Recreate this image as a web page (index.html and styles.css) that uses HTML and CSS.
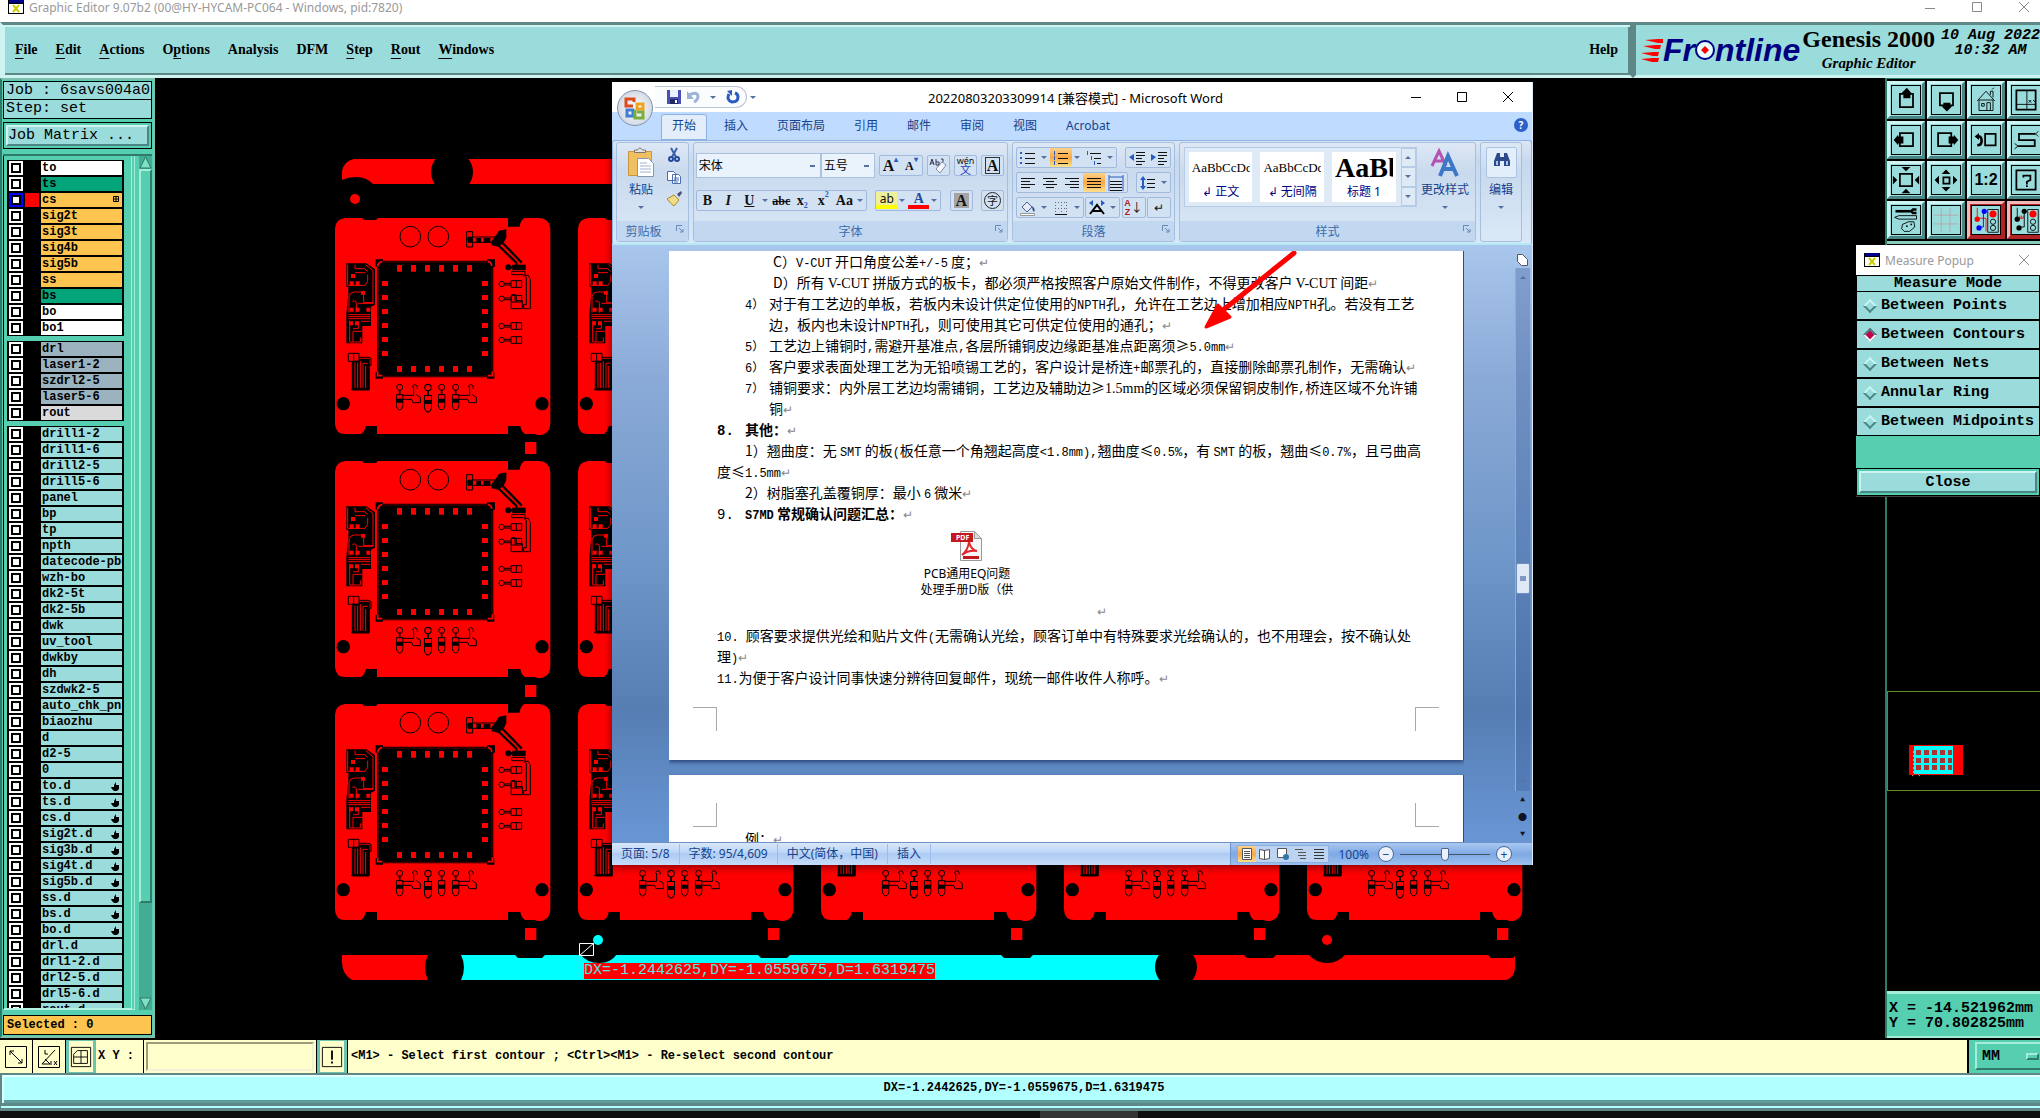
FILE: index.html
```html
<!DOCTYPE html>
<html lang="zh-CN">
<head>
    <meta charset="UTF-8">
    <meta name="viewport" content="width=device-width, initial-scale=1.0">
    <title>Graphic Editor</title>
    <link rel="stylesheet" href="styles.css">
</head>
<body>
    <header class="titlebar">
        <svg class="x-icon" width="16" height="14" viewBox="0 0 16 14"><path d="M0 0h16v14H0z"/><path fill="#fff" d="M1 4h14v9H1z"/><path fill="#008" d="M1 0h14v3H1z"/><path stroke="#cc0" stroke-width="2" d="M5 5l6 7m0-7l-6 7"/></svg>
        <span class="title-text">Graphic Editor 9.07b2 (00@HY-HYCAM-PC064 - Windows, pid:7820)</span>
        <div class="win-buttons">
            <button aria-label="Minimize"><svg width="11" height="11"><path d="M0 6.5h10"/></svg></button>
            <button aria-label="Maximize"><svg width="11" height="11"><path d="M.5.5h9v9h-9z"/></svg></button>
            <button aria-label="Close"><svg width="11" height="11"><path d="M0 0l10 10M10 0L0 10"/></svg></button>
        </div>
    </header>

    <div class="top">
        <nav class="menu">
            <a href="#"><u>F</u>ile</a>
            <a href="#"><u>E</u>dit</a>
            <a href="#"><u>A</u>ctions</a>
            <a href="#">O<u>p</u>tions</a>
            <a href="#">Analysis</a>
            <a href="#">DFM</a>
            <a href="#"><u>S</u>tep</a>
            <a href="#"><u>R</u>out</a>
            <a href="#"><u>W</u>indows</a>
            <a href="#" class="help">Help</a>
        </nav>
        <div class="brand">
            <div class="logo">
                <svg width="22" height="24" viewBox="0 0 22 24"><path fill="red" d="M4 2l13-1h5v4h-5zM2 8l13-1h5l-1 4h-5zM0 15l13-1h5l-1 4h-5zM0 21l12-1h6l-1 4h-6z"/></svg>
                <span>Fr</span><svg width="20" height="20" viewBox="0 0 20 20"><circle cx="10" cy="10" r="9" fill="#e6ffff" stroke="#008" stroke-width="2"/><path fill="red" d="M10 6l4 4-4 4-4-4z"/></svg><span>ntline</span>
            </div>
            <div class="product">
                <strong>Genesis 2000</strong>
                <em>Graphic Editor</em>
            </div>
            <div class="clock">10 Aug 2022<br>10:32 AM</div>
        </div>
    </div>

    <main class="main">
        <aside class="panel">
            <div class="job">Job : 6savs004a0</div>
            <div class="job step">Step: set</div>
            <div class="matrix"><button>Job Matrix ...</button></div>
            <div class="list-wrap">
                <div class="layers" id="layers"></div>
                <div class="scroll">
                    <button aria-label="Scroll up"><svg width="13" height="13"><path fill="#7ee0c6" stroke="#2f7a68" d="M6.5 1L12 12H1z"/></svg></button>
                    <div class="scroll-thumb"></div>
                    <button aria-label="Scroll down"><svg width="13" height="13"><path fill="#7ee0c6" stroke="#2f7a68" d="M6.5 12L12 1H1z"/></svg></button>
                </div>
            </div>
            <div class="selected">Selected : 0</div>
        </aside>

        <section class="canvas">
            <svg width="100%" height="100%">
                <defs>
                    <symbol id="padV" viewBox="0 0 24 84"><g fill="none" stroke="#000" stroke-width="3"><circle cx="12" cy="12" r="9"/><path fill="#000" d="M11 20h2v14h-2z"/><path d="M2 34h20v14H2zM2 56h20v12q-3 12-10 12T2 68z"/><path fill="#000" d="M2 48h20v8H2z"/></g></symbol>
                    <symbol id="padH" viewBox="0 0 76 28"><g fill="none" stroke="#000" stroke-width="3"><circle cx="12" cy="14" r="8"/><path d="M19 12h20M19 17h20M40 4h32v20H40zM56 4v20"/></g></symbol>
                    <symbol id="board" viewBox="0 0 666 738">
                        <path fill="red" d="M36 12H88q2 6 8 6h30q6 0 8-6H525V38H560Q562 20 574 12H620Q652 16 652 44V628Q652 656 628 662Q610 664 606 660H576Q564 652 562 636H525V660H132V636H98Q96 652 84 660H36Q8 660 6 630V44Q6 16 36 12z"/>
                        <path fill="red" d="M576 684h34v36h-34z"/>
                        <circle cx="31" cy="569" r="20"/><circle cx="627" cy="569" r="20"/>
                        <g fill="none" stroke="#000" stroke-width="3">
                            <circle cx="232" cy="68" r="31"/><circle cx="316" cy="68" r="31"/>
                            <path d="M401 53h18v16h84M401 53v46h18V85h62M401 75h18"/>
                        </g>
                        <path d="M404 68h16v18h-16zM430 72h14v14h-14zM452 72h20v14h-20zM476 80l12-14 10-16 22-4v24l-8 16-16 12-20-4z"/>
                        <path fill="none" stroke="#000" stroke-width="7" d="M492 90l58 56v14M506 84l60 62M524 160h52"/>
                        <circle cx="526" cy="160" r="9"/>
                        <path d="M538 152h40v16h-40z"/>
                        <path fill="none" stroke="#000" stroke-width="3" d="M536 172h40v12h10l6 12v88h-20v-12h8v-82l-10-8h-34zM536 242h10v18h22v24h-34z"/>
                        <rect x="132" y="140" width="349" height="350" rx="8"/>
                        <path fill="none" stroke="#000" stroke-width="8" d="M132 158v-18h18M462 140h20v18M132 474v16h18M480 474v16h-18"/>
                        <path fill="none" stroke="red" stroke-width="5" d="M134 158q0-12 14-16M464 142q12 2 12 14M134 472v13h14M478 472v13h-14"/>
                        <path fill="none" stroke="red" stroke-width="1" d="M137 162V470M477 162V470M150 144H462M150 487H462"/>
                        <path fill="none" stroke="red" stroke-width="20" stroke-dasharray="15 27" d="M192 163H418"/>
                        <path fill="none" stroke="red" stroke-width="18" stroke-dasharray="15 27" d="M192 465H418"/>
                        <path fill="none" stroke="red" stroke-width="18" stroke-dasharray="15 27" d="M156 201V430M456 201V430"/>
                        <g>
                            <path d="M40 148H100L126 166V272L114 278V336H88V388H40V300L46 240V218H40z"/>
                            <path fill="none" stroke="red" stroke-width="3" d="M44 152v62h52l8-12v-20M66 152v12h28l10 8M66 176h30M98 152l22 18v98H76M48 296v-50q4-12 16-12h26M92 230v36h30M70 296v-28q0-10-12-6M46 302h66M46 308h66M46 314h66M50 320v64h32v-14M60 384v-32h28M76 328v16H60M112 322H84"/>
                            <path fill="red" d="M54 180h12v12H54zM50 202h12v14H50zM68 202h12v14H68zM84 232h12v10H84zM50 281h12v12H50zM68 281h12v12H68zM50 322h10v12H50zM66 322h12v12H66zM100 281h12v12h-12z"/>
                            <path fill="none" stroke="#000" stroke-width="3" d="M46 418h32v24H46zM62 418v24M78 430h30l6 4v20h-6v74H58v-86M54 526h56"/>
                            <path d="M58 440h20v-6h32v92H58z"/>
                            <path fill="none" stroke="red" stroke-width="3" d="M66 446v76M74 446v76M82 442v80M90 522v-74h14M98 522v-66"/>
                        </g>
                        <use href="#padV" x="188" y="508" width="24" height="84"/>
                        <use href="#padV" x="272" y="508" width="26" height="90"/>
                        <use href="#padV" x="314" y="508" width="24" height="84"/>
                        <use href="#padV" x="356" y="508" width="24" height="84"/>
                        <g fill="none" stroke="#000" stroke-width="3"><path d="M208 544h34v-22q-8-6 2-10 12 2 8 12M208 556h28l4 10h22v-16l-12-8M376 544h34v-22q-8-6 2-10 12 2 8 12M376 556h28l4 10h22v-16l-12-8"/></g>
                        <use href="#padH" x="494" y="196" width="76" height="28"/>
                        <use href="#padH" x="494" y="240" width="76" height="28"/>
                        <use href="#padH" x="494" y="322" width="76" height="28"/>
                        <use href="#padH" x="494" y="364" width="76" height="28"/>
                    </symbol>
                </defs>
                <g transform="translate(-155 -78)">
                    <path fill="red" d="M354 159H1515V184H373Q366 177 357 177 348 177 342 180V171Q344 161 354 159z"/>
                    <circle cx="452" cy="172" r="21"/>
                    <circle cx="355" cy="199" r="5" fill="red"/>
                    <g id="boards"></g>
                    <path fill="red" d="M342 955H428Q422 967 428 980H352Q342 974 342 962z"/>
                    <path fill="red" d="M1180 955H1515V968Q1514 978 1506 980H1180z"/>
                    <path fill="#0ff" d="M461 955H1176V980H461Q467 967 461 955z"/>
                    <circle cx="1176" cy="967" r="21"/>
                    <path d="M514 954h32l-4 4h-24zM757 954h34l-4 4h-26zM1000 954h34l-4 4h-26zM1243 954h34l-4 4h-26zM1487 954h30l-4 4h-22z"/>
                    <path d="M580 954h37q-6 9-18 9t-19-9zM1308 954h38q-8 9-19 9t-19-9z"/>
                    <circle cx="598" cy="940" r="5" fill="#0ff"/>
                    <circle cx="1327" cy="940" r="5" fill="red"/>
                    <path fill="#000" stroke="#fff" d="M579.5 943.5h14v12h-14zM579 956l15-13"/>
                </g>
            </svg>
            <output class="measure">DX=-1.2442625,DY=-1.0559675,D=1.6319475</output>
        </section>

        <aside class="side">
            <div class="tools">
                <button aria-label="Pan up"><svg viewBox="0 0 32 32"><path class="w2" d="M9 9h15v15H9z"/><path d="M11 8l6-6 5 6-1 1v5h-8V9z"/></svg></button>
                <button aria-label="Pan down"><svg viewBox="0 0 32 32"><path class="w2" d="M9 8h15v14H9z"/><path d="M13 19h8v4h2l-6 6-6-6h2z"/></svg></button>
                <button aria-label="Home"><svg viewBox="0 0 32 32"><path class="ln" d="M8 16h16v12H8zM6 17L16 6l10 11M17 28v-9h4v9M11 20h3v3h-3zM21 10V6h3v7M23 4l2-2"/></svg></button>
                <button aria-label="XY window"><svg viewBox="0 0 32 32"><path class="w2" d="M5 5h22v22H5z"/><path class="ln" d="M17 5v22M5 21h22M19 16l3 3m0-3l-3 3M24 16l2 2 1-2"/></svg></button>
                <button aria-label="Pan left"><svg viewBox="0 0 32 32"><path class="w2" d="M9 8h15v15H9z"/><path d="M2 16l5-6v2h6v8H7v2z"/></svg></button>
                <button aria-label="Pan right"><svg viewBox="0 0 32 32"><path class="w2" d="M7 8h15v15H7z"/><path d="M30 16l-5-6v2h-6v8h6v2z"/></svg></button>
                <button aria-label="Previous view"><svg viewBox="0 0 32 32"><path class="w2" d="M15 9h12v13H15z"/><path class="w3" d="M6 12q5-1 5 5 0 5-5 5"/><path d="M3 12l5-4v8z"/></svg></button>
                <button aria-label="Serpentine"><svg viewBox="0 0 32 32"><path class="w2" d="M27 9H8v7h18v7H7"/><path class="ln" d="M27 9l3-3M27 9l3 3M7 23l-4-3M7 23l-4 3"/></svg></button>
                <button aria-label="Zoom out"><svg viewBox="0 0 32 32"><path class="w2" d="M9 9h14v14H9z"/><path d="M11 1h10l-5 5zM11 31h10l-5-5zM1 11v10l5-5zM31 11v10l-5-5z"/></svg></button>
                <button aria-label="Zoom in"><svg viewBox="0 0 32 32"><path class="w2" d="M13 13h7v7h-7z"/><path d="M11 9h10l-5-5zM11 24h10l-5 5zM8 11v10l-5-5zM24 11v10l5-5z"/></svg></button>
                <button class="ratio">1:2</button>
                <button aria-label="Query"><svg viewBox="0 0 32 32"><path class="w2" d="M5 5h22v22H5z"/><path class="w2" d="M13 13v-2h8v5l-4 2v3M16 23h2"/></svg></button>
                <button aria-label="Drawing tools"><svg viewBox="0 0 32 32"><path class="w3" d="M4 6h17"/><path class="w3" d="M28 4h-4l-2 2 2 2h4"/><path class="ln" d="M3 13l5-2h20v4H8zM12 21l7-3h6l1 6-6 5h-6l-3-3z"/><circle cx="17" cy="23" r="1"/><circle cx="22" cy="21" r="1"/></svg></button>
                <button aria-label="Grid"><svg viewBox="0 0 32 32"><path fill="none" stroke="#b9a3a8" d="M10.500 2v28M20.500 2v28M2 10.500h28M2 20.500h28"/></svg></button>
                <button class="hot" aria-label="Snap one"><svg viewBox="0 0 32 32"><path fill="none" stroke="red" d="M6 2v12h10v15"/><path fill="none" stroke="#00f" d="M13 6v18H7"/><circle cx="6" cy="15" r="3" fill="red"/><circle cx="14" cy="6" r="3" fill="#00f"/><circle cx="8" cy="25" r="3" fill="#00f"/><path class="ln" d="M18 4h12v26H18z"/><circle cx="24" cy="9" r="4" fill="red"/><circle class="ln" cx="24" cy="18" r="3"/><circle class="ln" cx="24" cy="25" r="3"/></svg></button>
                <button class="hot" aria-label="Snap two"><svg viewBox="0 0 32 32"><path class="ln" d="M6 2v12M14 6v18H8"/><path fill="none" stroke="red" d="M7 14h6M9 14v-3M11 14v-3M13 14v-3"/><circle cx="6" cy="15" r="3"/><circle cx="14" cy="6" r="3"/><circle cx="8" cy="25" r="3"/><path class="ln" d="M18 4h12v26H18z"/><circle cx="24" cy="9" r="4" fill="red"/><circle class="ln" cx="24" cy="18" r="3"/><circle class="ln" cx="24" cy="25" r="3"/></svg></button>
            </div>
            <div class="overview">
                <svg width="54" height="34" viewBox="0 0 54 34">
                    <path fill="red" d="M0 0h54v30H0z"/><path fill="#0ff" d="M5 1h39v28H5z"/>
                    <path fill="none" stroke="#a33" stroke-width="5" stroke-dasharray="5 3" d="M7 7.500h36M7 15.500h36M7 22.500h36"/>
                    <path fill="none" stroke="#aaa" stroke-dasharray="2 2" d="M4.500 6v24M3 31l4-3 4 3"/>
                </svg>
            </div>
            <div class="coords">X = -14.521962mm<br>Y = 70.802825mm</div>
        </aside>
    </main>

    <footer class="command">
        <button class="flat" aria-label="Snap off"><svg viewBox="0 0 24 24"><path class="ln" d="M1.500 1.500h21v21h-21zM6 6l12 12M6 10V6h4M14 18h4v-4"/></svg></button>
        <button class="flat" aria-label="Angle"><svg viewBox="0 0 24 24"><path class="ln" d="M1.500 1.500h21v21h-21zM5 19L18 5M5 19h8l-5-5M8 5v4h3M14 16v4M17 16l3 4M20 16l-3 4"/></svg></button>
        <button class="raised" aria-label="Grid snap"><svg viewBox="0 0 24 24"><path class="ln" d="M1.500 1.500h21v21h-21zM8 5h11v14H4V9zM12 5v14M4 12h15"/></svg></button>
        <label for="xy">X Y :</label>
        <div class="xy"><input id="xy" type="text"></div>
        <button class="raised" aria-label="Alert"><svg viewBox="0 0 24 24"><path class="ln" d="M1.500 1.500h21v21h-21z"/><path class="w2" d="M12 5v10M12 17v2"/></svg></button>
        <p class="message">&lt;M1&gt; - Select first contour ; &lt;Ctrl&gt;&lt;M1&gt; - Re-select second contour</p>
        <div class="units"><button>MM<i></i></button></div>
    </footer>
    <footer class="status">DX=-1.2442625,DY=-1.0559675,D=1.6319475</footer>
    <div class="taskbar"><i></i></div>

    <section class="popup">
        <div class="popup-title">
            <svg class="x-icon" width="16" height="14" viewBox="0 0 16 14"><path d="M0 0h16v14H0z"/><path fill="#fff" d="M1 4h14v9H1z"/><path fill="#008" d="M1 0h14v3H1z"/><path stroke="#cc0" stroke-width="2" d="M5 5l6 7m0-7l-6 7"/></svg>
            <span>Measure Popup</span>
            <button aria-label="Close popup"><svg width="11" height="11"><path d="M0 0l10 10M10 0L0 10"/></svg></button>
        </div>
        <h2>Measure Mode</h2>
        <label><input type="radio" name="mode">Between Points</label>
        <label><input type="radio" name="mode" checked>Between Contours</label>
        <label><input type="radio" name="mode">Between Nets</label>
        <label><input type="radio" name="mode">Annular Ring</label>
        <label><input type="radio" name="mode">Between Midpoints</label>
        <div class="popup-foot"><button>Close</button></div>
    </section>

    <section class="word">
        <div class="word-title">
            <div class="qat">
                <button aria-label="保存"><svg width="14" height="14" viewBox="0 0 14 14"><path fill="#4a4fb5" d="M0 0h14v14H0z"/><path fill="#e9f0fb" d="M3 0h8v7H3z"/><path fill="#222a66" d="M3 9h8v5H3z"/><path fill="#fff" d="M8 10h2v3H8z"/></svg></button>
                <button aria-label="撤消"><svg width="14" height="14" viewBox="0 0 14 14"><path fill="none" stroke="#9db3d6" stroke-width="3" d="M2 5q8-4 9 1 0 4-4 6"/><path fill="#9db3d6" d="M0 1v8h7z"/></svg></button>
                <i class="dd"></i>
                <button aria-label="重复"><svg width="14" height="14" viewBox="0 0 14 14"><path fill="none" stroke="#2a5bc0" stroke-width="3" d="M3 4q-3 6 3 8 6 0 6-5 0-3-3-4"/><path fill="#2a5bc0" d="M6 0v6L1 1z"/></svg></button>
            </div>
            <i class="dd more"></i>
            <span class="word-name">20220803203309914 [兼容模式] - Microsoft Word</span>
            <div class="win-buttons dark">
                <button aria-label="最小化"><svg width="11" height="11"><path d="M0 5.500h10"/></svg></button>
                <button aria-label="最大化"><svg width="11" height="11"><path d="M.5.5h9v9h-9z"/></svg></button>
                <button aria-label="关闭"><svg width="11" height="11"><path d="M0 0l10 10M10 0L0 10"/></svg></button>
            </div>
        </div>
        <button class="orb" aria-label="Office"><svg width="24" height="24" viewBox="0 0 24 24"><g fill="none" stroke-width="3"><path stroke="#dd4a1c" d="M10 10H3V3h8v3"/><path stroke="#f0a31c" d="M14 8h6v5h-6z"/><path stroke="#3f7fd0" d="M4 14h6v6H4z"/><path stroke="#79ae3a" d="M14 16h6v6h-8v-8"/></g></svg></button>
        <nav class="tabs">
            <a href="#" class="active">开始</a>
            <a href="#">插入</a>
            <a href="#">页面布局</a>
            <a href="#">引用</a>
            <a href="#">邮件</a>
            <a href="#">审阅</a>
            <a href="#">视图</a>
            <a href="#">Acrobat</a>
            <button class="help-btn" aria-label="帮助">?</button>
        </nav>

        <div class="ribbon">
            <div class="group clip">
                <div class="body">
                    <button class="big paste"><svg width="28" height="32" viewBox="0 0 28 32"><path fill="#f0c060" stroke="#c8963c" d="M1.500 4.500h23v24h-23z"/><path fill="#e4e4e4" stroke="#777" d="M7.500 5.500V3h3q2-4 5 0h3v2.500z"/><path fill="#fff" stroke="#8a96ad" d="M10.500 11.500h11l5 5v13h-16z"/><path stroke="#9fb2d4" d="M13 16h7M13 19h11M13 22h11M13 25h11"/></svg>粘贴<i class="dd"></i></button>
                    <div class="stack">
                        <button aria-label="剪切"><svg width="16" height="16" viewBox="0 0 16 16"><path fill="none" stroke="#3b5fa8" stroke-width="2" d="M5 1l5 9M11 1L6 10"/><circle cx="5" cy="12" r="2" fill="none" stroke="#234a9b" stroke-width="2"/><circle cx="11" cy="12" r="2" fill="none" stroke="#234a9b" stroke-width="2"/></svg></button>
                        <button aria-label="复制"><svg width="16" height="16" viewBox="0 0 16 16"><path fill="#fff" stroke="#4a6eb5" d="M1.500 2.500h6l2 2v7h-8zM6.500 5.500h6l2 2v7h-8z"/><path stroke="#4a6eb5" d="M8 9h5M8 11h5M8 13h4"/></svg></button>
                        <button aria-label="格式刷"><svg width="16" height="16" viewBox="0 0 16 16"><path fill="#4b4f80" d="M11 3l4-3 1 2-3 4z"/><path fill="#f3dc86" stroke="#a88830" d="M1 8l7-4 5 5-5 6q-3-2-7-7z"/></svg></button>
                    </div>
                </div>
                <h3>剪贴板<svg class="launch" width="8" height="8" viewBox="0 0 8 8"><path d="M.5 6V.5H6M3 3l4 4M7 4v3H4"/></svg></h3>
            </div>
            <div class="group font">
                <div class="body rows2">
                    <div class="line">
                        <div class="combos">
                            <select class="face" aria-label="字体"><option>宋体</option></select>
                            <select class="size" aria-label="字号"><option>五号</option></select>
                        </div>
                        <div class="set"><button class="ser f18">A<sup>▴</sup></button><button class="ser f14">A<sup>▾</sup></button></div>
                        <div class="set"><button aria-label="清除格式"><svg width="18" height="18" viewBox="0 0 18 18"><path fill="#f4f7fb" stroke="#7e8ca8" d="M7 12l6-7 4 3-6 8z"/><path fill="none" stroke="#335" d="M1 8l2-6 2 6M2 6h3M7 2v6h3V5H7M12 2h2v3"/></svg></button></div>
                        <div class="set"><button class="wen"><small>wén</small>文</button></div>
                        <div class="set"><button class="ser f16"><b class="boxed">A</b></button></div>
                    </div>
                    <div class="line">
                        <div class="set"><button class="ser"><b>B</b></button><button class="ser"><b><i>I</i></b></button><button class="ser"><b><u>U</u></b></button><i class="dd"></i><button class="ser f14"><s>abc</s></button><button class="ser">x<sub>2</sub></button><button class="ser">x<sup>2</sup></button><button class="ser">Aa</button><i class="dd"></i></div>
                        <div class="set"><button class="hl">ab</button><i class="dd"></i><button class="ser col">A</button><i class="dd"></i></div>
                        <div class="set"><button class="ser f16"><b class="shade">A</b></button></div>
                        <div class="set"><button class="ring">字</button></div>
                    </div>
                </div>
                <h3>字体<svg class="launch" width="8" height="8" viewBox="0 0 8 8"><path d="M.5 6V.5H6M3 3l4 4M7 4v3H4"/></svg></h3>
            </div>
            <div class="group para">
                <div class="body rows3">
                    <div class="line">
                        <div class="set"><button aria-label="项目符号"><svg width="16" height="16"><path class="bars" d="M5 3h10M5 8h10M5 13h10"/><path stroke="#2a5bc0" stroke-width="2" d="M0 3h2M0 8h2M0 13h2"/></svg></button><i class="dd"></i><button class="on" aria-label="编号"><svg width="16" height="16"><path class="bars" d="M5 3h10M5 8h10M5 13h10"/><path stroke="#2a5bc0" d="M1.500 1v4M1.500 6v4M1.500 11v4"/></svg></button><i class="dd"></i><button aria-label="多级列表"><svg width="16" height="16"><path class="bars" d="M4 3h11M8 8h7M11 13h4"/><path stroke="#2a5bc0" d="M1.500 1v4M5.500 6v4M8.500 11v4"/></svg></button><i class="dd"></i></div>
                        <div class="set"><button aria-label="减少缩进量"><svg width="16" height="16"><path class="bars" d="M7 2h9M7 5h9M7 8h6M7 11h9M7 14h6"/><path fill="#2a5bc0" d="M5 4v7L0 7z"/></svg></button><button aria-label="增加缩进量"><svg width="16" height="16"><path class="bars" d="M7 2h9M7 5h9M7 8h6M7 11h9M7 14h6"/><path fill="#2a5bc0" d="M0 4v7l5-4z"/></svg></button></div>
                    </div>
                    <div class="line">
                        <div class="set"><button aria-label="左对齐"><svg width="16" height="16"><path class="bars" d="M1 3h14M1 6h9M1 9h14M1 12h9"/></svg></button><button aria-label="居中"><svg width="16" height="16"><path class="bars" d="M1 3h14M4 6h8M1 9h14M4 12h8"/></svg></button><button aria-label="右对齐"><svg width="16" height="16"><path class="bars" d="M1 3h14M6 6h9M1 9h14M6 12h9"/></svg></button><button class="on" aria-label="两端对齐"><svg width="16" height="16"><path class="bars" d="M1 3h14M1 6h14M1 9h14M1 12h14"/></svg></button><button aria-label="分散对齐"><svg width="16" height="16"><path class="bars" d="M2 6h12M2 9h12M2 12h12M2 15h12"/><path stroke="#2a5bc0" d="M1 0v16M15 0v16M1 2h14"/></svg></button></div>
                        <div class="set"><button aria-label="行距"><svg width="16" height="16"><path class="bars" d="M7 4h8M7 8h8M7 12h8"/><path fill="#2a5bc0" d="M3 1l3 4H4v6h2l-3 4-3-4h2V5H0z"/></svg></button><i class="dd"></i></div>
                    </div>
                    <div class="line">
                        <div class="set"><button aria-label="底纹"><svg width="16" height="16"><path fill="#e6edf8" stroke="#4a5f8a" d="M2 7l5-5 5 5-5 5z"/><path fill="#2a4b90" d="M12 6q4 3 2 6-2-2-2-6z"/><path fill="#fff" stroke="#999" d="M.5 13.500h14v2H.5z"/></svg></button><i class="dd"></i><button aria-label="边框"><svg width="16" height="16"><path fill="none" stroke="#667" stroke-dasharray="1 2" d="M2 2.500h12M2 8.500h12M2.500 2v12M8.500 2v12M13.500 2v12"/><path class="bars" d="M2 14h12"/></svg></button><i class="dd"></i></div>
                        <div class="set"><button aria-label="中文版式"><svg width="16" height="16"><path fill="none" stroke="#000" stroke-width="2" d="M1 14l7-9 7 9M4 11h8"/><path fill="#2a5bc0" d="M0 3l4-3v6zM16 3l-4-3v6z"/></svg></button><i class="dd"></i></div>
                        <div class="set"><button class="sort"><span>A<br>Z</span>↓</button></div>
                        <div class="set"><button>↵</button></div>
                    </div>
                </div>
                <h3>段落<svg class="launch" width="8" height="8" viewBox="0 0 8 8"><path d="M.5 6V.5H6M3 3l4 4M7 4v3H4"/></svg></h3>
            </div>
            <div class="group styles">
                <div class="body">
                    <div class="gallery">
                        <button><span>AaBbCcDd</span>↲ 正文</button>
                        <button><span>AaBbCcDd</span>↲ 无间隔</button>
                        <button><span class="h1">AaBb</span>标题 1</button>
                        <div class="gal-scroll"><button aria-label="上一行"><i class="dd up"></i></button><button aria-label="下一行"><i class="dd"></i></button><button aria-label="其他"><i class="dd"></i></button></div>
                    </div>
                    <button class="big"><svg width="32" height="32" viewBox="0 0 32 32"><path fill="none" stroke="#b553b0" stroke-width="3" d="M3 19L10 4l7 15M6 14h9"/><path fill="none" stroke="#3c78c8" stroke-width="4" d="M11 29l8-20 9 20M14 22h12"/></svg>更改样式<i class="dd"></i></button>
                </div>
                <h3>样式<svg class="launch" width="8" height="8" viewBox="0 0 8 8"><path d="M.5 6V.5H6M3 3l4 4M7 4v3H4"/></svg></h3>
            </div>
            <div class="group edit">
                <button class="big"><span class="bino"><svg width="16" height="16" viewBox="0 0 16 16"><path fill="#2d4a8a" d="M3 1h3v4h4V1h3l3 8v5h-6V9H6v5H0V9z"/><path fill="#a9c3ee" d="M2 9h2v4H2zM12 9h2v4h-2z"/></svg></span>编辑<i class="dd"></i></button>
            </div>
        </div>

        <div class="doc">
            <div class="pages">
                <article class="page">
                    <p class="in3">C）<span>V-CUT</span> 开口角度公差<span>+/-5</span> 度；<i>↵</i></p>
                    <p class="in3">D）所有 <span class="rm">V-CUT</span> 拼版方式的板卡，都必须严格按照客户原始文件制作，不得更改客户 <span class="rm">V-CUT</span> 间距<i>↵</i></p>
                    <p class="num"><b>4）</b>对于有工艺边的单板，若板内未设计供定位使用的<span>NPTH</span>孔，允许在工艺边上增加相应<span>NPTH</span>孔。若没有工艺边，板内也未设计<span>NPTH</span>孔，则可使用其它可供定位使用的通孔；<i>↵</i></p>
                    <p class="num"><b>5）</b>工艺边上铺铜时<span>,</span>需避开基准点<span>,</span>各层所铺铜皮边缘距基准点距离须≥<span>5.0mm</span><i>↵</i></p>
                    <p class="num"><b>6）</b>客户要求表面处理工艺为无铅喷锡工艺的，客户设计是桥连<span>+</span>邮票孔的，直接删除邮票孔制作，无需确认<i>↵</i></p>
                    <p class="num"><b>7）</b>铺铜要求：内外层工艺边均需铺铜，工艺边及辅助边≥<span class="rm">1.5mm</span>的区域必须保留铜皮制作<span>,</span>桥连区域不允许铺铜<i>↵</i></p>
                    <p class="head"><b>8.</b><strong>其他：</strong><i>↵</i></p>
                    <p class="first">1）翘曲度：无 <span>SMT</span> 的板<span>(</span>板任意一个角翘起高度<span>&lt;1.8mm),</span>翘曲度≤<span>0.5%</span>，有 <span>SMT</span> 的板，翘曲≤<span>0.7%</span>，且弓曲高度≤<span>1.5mm</span><i>↵</i></p>
                    <p class="first">2）树脂塞孔盖覆铜厚：最小 <span>6</span> 微米<i>↵</i></p>
                    <p class="head"><span class="no">9.</span><strong><span>S7MD</span> 常规确认问题汇总：</strong><i>↵</i></p>
                    <div class="attach">
                        <a href="#">
                            <svg width="32" height="32" viewBox="0 0 32 32"><path fill="#f7f7f7" stroke="#999" d="M9.500 1.500h14l7 7v22h-21z"/><path fill="#ddd" stroke="#999" d="M23.500 1.500v7h7z"/><rect y="3" width="22" height="9" fill="#c4181f"/><path fill="none" stroke="#e0252b" stroke-width="2" d="M18 12q-1 8-7 13 6-5 15-4-6-1-8-9z"/><path fill="#c4181f" d="M12 26h16v3H12z"/><text x="5" y="10" fill="#fff" font-size="7" font-weight="bold">PDF</text></svg>
                            PCB通用EQ问题<br>处理手册D版（供
                        </a>
                        <i>↵</i>
                    </div>
                    <p><span>10. </span>顾客要求提供光绘和贴片文件<span>(</span>无需确认光绘，顾客订单中有特殊要求光绘确认的，也不用理会，按不确认处理<span>)</span><i>↵</i></p>
                    <p><span>11.</span>为便于客户设计同事快速分辨待回复邮件，现统一邮件收件人称呼。<i>↵</i></p>
                    <div class="marks foot"><u></u><u></u></div>
                </article>
                <article class="page next">
                    <div class="marks top-marks"><u></u><u></u></div>
                    <p class="first">例：<i>↵</i></p>
                </article>
                <svg class="arrow" width="96" height="84" viewBox="0 0 96 84"><path stroke="red" stroke-width="5" stroke-linecap="round" d="M92 2L20 60"/><path fill="red" stroke="red" stroke-width="3" stroke-linejoin="round" d="M4 76L16 54 28 66z"/></svg>
            </div>
            <div class="vscroll">
                <button aria-label="标尺"><svg width="12" height="14"><path fill="#fff" stroke="#556" d="M.5 1.500h5l5 5v6h-6l-4-4z"/></svg></button>
                <div class="track"><i class="dd up"></i><div class="thumb"></div><i class="dd"></i></div>
                <button>⯅</button><button>●</button><button>⯆</button>
            </div>
        </div>

        <div class="word-status">
            <span>页面: 5/8</span><span>字数: 95/4,609</span><span>中文(简体，中国)</span><span>插入</span>
            <div class="zoom">
                <div class="views">
                    <button class="on" aria-label="页面视图"><svg width="14" height="14"><path fill="#fff" stroke="#555" d="M2.500 1.500h9v11h-9z"/><path stroke="#555" d="M4 4.500h6M4 6.500h6M4 8.500h6M4 10.500h6"/></svg></button>
                    <button aria-label="阅读版式"><svg width="14" height="14"><path fill="#fff" stroke="#555" d="M1.500 2.500l5 1v9l-5-1zM11.500 2.500l-5 1v9l5-1z"/></svg></button>
                    <button aria-label="Web版式"><svg width="14" height="14"><path fill="#fff" stroke="#555" d="M1.500 1.500h9v9h-9z"/><circle cx="10" cy="10" r="3" fill="#37a"/></svg></button>
                    <button aria-label="大纲"><svg width="14" height="14"><path stroke="#555" d="M1 2.500h8M4 5.500h8M4 8.500h8M6 11.500h6"/></svg></button>
                    <button aria-label="草稿"><svg width="14" height="14"><path stroke="#333" d="M2 2.500h10M2 5.500h10M2 8.500h10M2 11.500h10"/></svg></button>
                </div>
                <output>100%</output>
                <button class="round">−</button>
                <input type="range" aria-label="显示比例" value="50">
                <button class="round">+</button>
            </div>
        </div>
    </section>

    <script>
        const groups = [
            [
                ['to', 'white'], ['ts', 'green'], ['cs', 'gold', 'active'], ['sig2t', 'gold'], ['sig3t', 'gold'],
                ['sig4b', 'gold'], ['sig5b', 'gold'], ['ss', 'gold'], ['bs', 'green'], ['bo', 'white'], ['bo1', 'white']
            ],
            [['drl', 'steel'], ['laser1-2', 'steel'], ['szdrl2-5', 'steel'], ['laser5-6', 'steel'], ['rout', 'grey']],
            ['drill1-2', 'drill1-6', 'drill2-5', 'drill5-6', 'panel', 'bp', 'tp', 'npth', 'datecode-pbc', 'wzh-bo',
             'dk2-5t', 'dk2-5b', 'dwk', 'uv_tool', 'dwkby', 'dh', 'szdwk2-5', 'auto_chk_pnl', 'biaozhu', 'd', 'd2-5', '0',
             'to.d*', 'ts.d*', 'cs.d*', 'sig2t.d*', 'sig3b.d*', 'sig4t.d*', 'sig5b.d*', 'ss.d*', 'bs.d*', 'bo.d*',
             'drl.d', 'drl1-2.d', 'drl2-5.d', 'drl5-6.d', 'rout.d'].map(n => [n, 'aqua'])
        ];
        const hand = '<svg width="8" height="9"><path d="M5 0v3h3v4L6 9H3L1 7 0 5h3V3z"/></svg>';
        const mark = '<svg width="6" height="6"><path fill="none" stroke="#000" d="M.5.5h5v5h-5zM3 0v6M0 3h6"/></svg>';

        document.getElementById('layers').innerHTML = groups.map(rows =>
            '<div class="layer-group">' + rows.map(([name, color, state]) =>
                `<label class="layer ${state || ''}"><input type="checkbox"><i></i>` +
                `<span class="${color}">${name.replace('*', '')}</span>` +
                (name.endsWith('*') ? hand : state ? mark : '') + '</label>'
            ).join('') + '</div>'
        ).join('');

        // 5 x 3 step-and-repeat, 243 px pitch
        let boards = '';
        for (let row = 0; row < 3; row++) {
            for (let col = 0; col < 5; col++) {
                boards += `<use href="#board" x="${333 + col * 243}" y="${214 + row * 243}" width="222" height="246"/>`;
            }
        }
        document.getElementById('boards').innerHTML = boards;
    </script>
</body>
</html>
```
FILE: styles.css
```css
* {
    margin: 0;
    padding: 0;
    box-sizing: border-box;
}
body {
    display: flex;
    flex-direction: column;
    height: 100vh;
    overflow: hidden;
    position: relative;
    background: #000;
    color: #000;
    font-family: "Liberation Mono", "Noto Sans CJK SC", monospace;
    font-size: 12px;
}
button, input, select {
    font: inherit;
    color: inherit;
    background: none;
    border: none;
    border-radius: 0;
}
a {
    color: inherit;
    text-decoration: none;
}
svg {
    display: block;
    flex: none;
}
.ln { fill: none; stroke: #000; }
.w2 { fill: none; stroke: #000; stroke-width: 2; }
.w3 { fill: none; stroke: #000; stroke-width: 3; }

/* title bar */
.titlebar {
    display: flex;
    height: 22px;
    background: #fff;
    color: #999;
    font-family: "Noto Sans", sans-serif;
    padding: 0 10px 8px 8px;
    align-items: center;
    gap: 5px;
}
.win-buttons {
    display: flex;
    gap: 36px;
    margin-left: auto;
}
.win-buttons path, .popup-title button path {
    fill: none;
    stroke: #888;
}
.win-buttons.dark path { stroke: #000; }

/* menu and brand */
.top {
    display: flex;
    height: 56px;
    background: #9adbdb;
}
.menu {
    flex: 1;
    display: flex;
    align-items: center;
    gap: 18px;
    padding: 0 12px;
    border: 3px solid #5f8786;
    border-color: #5f8786 #5f8786 #cdf3f3 #cdf3f3;
    box-shadow: inset 2px 2px #cdf3f3, inset -2px -2px #5f8786;
    font: bold 14px "Liberation Serif", serif;
}
.menu u { text-underline-offset: 4px; }
.help { margin-left: auto; }
.brand {
    width: 407px;
    display: flex;
    border: 3px solid #5f8786;
    border-width: 3px 0 3px 3px;
    border-bottom-color: #cdf3f3;
    padding-left: 5px;
    overflow: hidden;
}
.logo {
    display: flex;
    align-items: center;
    color: #000080;
    font: italic bold 32px/48px "Liberation Sans", sans-serif;
}
.product {
    width: 144px;
    text-align: center;
    font-family: "Liberation Serif", serif;
    line-height: 20px;
    white-space: nowrap;
}
.product strong {
    display: block;
    font-size: 24px;
    line-height: 28px;
}
.product em {
    font-weight: bold;
    font-size: 15px;
}
.clock {
    font: italic bold 15px/15px "Liberation Mono", monospace;
    padding: 3px 0 0 4px;
    text-align: center;
    white-space: nowrap;
}

/* main area */
.main {
    flex: 1;
    min-height: 0;
    display: flex;
}
.panel {
    width: 155px;
    display: flex;
    flex-direction: column;
    background: #55cfb0;
    border: 2px solid #7fbfae;
    border-left-color: #2f7a68;
    padding: 1px 1px 0;
    font-weight: bold;
}
.job {
    height: 19px;
    border: 1px solid #000;
    background: #9adbdb;
    padding-left: 2px;
    font: 15px/18px "Liberation Mono", monospace;
    white-space: nowrap;
}
.step { border-top: none; }
.matrix {
    margin-top: 3px;
    height: 27px;
    border: 1px solid #000;
    padding: 2px;
}
.matrix button, .popup-foot button {
    display: block;
    width: 100%;
    height: 100%;
    background: #9adbdb;
    border: 2px solid #cdf3f3;
    border-right-color: #4a8586;
    border-bottom-color: #4a8586;
    font-size: 15px;
    line-height: 17px;
}
.matrix button {
    text-align: left;
    font-weight: normal;
}
.list-wrap {
    flex: 1;
    min-height: 0;
    display: flex;
    gap: 4px;
    margin-top: 5px;
    border-top: 2px solid #2f7a68;
}
.layers {
    flex: 1;
    overflow: hidden;
    display: flex;
    flex-direction: column;
    gap: 5px;
    padding: 4px 7px 0 3px;
    border-left: 1px solid #000;
    border-right: 4px double #a5ecd9;
    border-bottom: 2px solid #b5f2e2;
}
.layer-group {
    background: #000;
    flex: none;
}
.layer {
    display: flex;
    align-items: center;
    height: 16px;
    gap: 2px;
    padding: 0 2px;
    position: relative;
}
.layer input {
    appearance: none;
    width: 14px;
    height: 14px;
    background: #fff;
    border: 2px solid #fff;
    outline: 2px solid #000;
    outline-offset: -4px;
}
.layer i {
    width: 14px;
    height: 14px;
}
.layer.active input { border-color: #00f; background: #fff; }
.layer.active i { background: red; }
.layer span {
    flex: 1;
    height: 14px;
    line-height: 15px;
    padding-left: 1px;
    overflow: hidden;
    white-space: nowrap;
}
.layer svg {
    position: absolute;
    right: 5px;
    top: 4px;
}
.white { background: #fff; }
.green { background: #05a57c; }
.gold { background: #fdc44f; }
.steel { background: #9ab3be; }
.grey { background: #dadada; }
.aqua { background: #9adbdb; }
.scroll {
    width: 13px;
    display: flex;
    flex-direction: column;
    background: #43ac93;
}
.scroll-thumb {
    height: 86%;
    margin-bottom: auto;
    background: #55cfb0;
    border: 2px solid #a5ecd9;
    border-right-color: #2f7a68;
    border-bottom-color: #2f7a68;
}
.selected {
    margin: 5px 0 1px;
    height: 20px;
    padding-left: 3px;
    border: 1px solid #000;
    background: #fdc44f;
    line-height: 19px;
}
.canvas {
    flex: 1;
    position: relative;
    overflow: hidden;
}
.measure {
    position: absolute;
    left: 429px;
    bottom: 59px;
    background: red;
    color: #5be3e3;
    font-size: 15px;
    line-height: 16px;
}
.side {
    width: 155px;
    border-left: 2px solid #2f7a68;
    display: flex;
    flex-direction: column;
    overflow: hidden;
}
.tools {
    display: grid;
    grid-template-columns: repeat(4, 38px);
    gap: 2px;
    padding: 2px 0;
    border-top: 1px solid #2f7a68;
    border-bottom: 3px solid #87c9bb;
}
.tools button {
    height: 38px;
    background: #9adbdb;
    border: 3px solid #cdf3f3;
    border-right-color: #4a8586;
    border-bottom-color: #4a8586;
}
.tools svg {
    width: 30px;
    height: 30px;
    margin: 1px;
    border: 1px solid #000;
}
.tools .ratio {
    font: bold 16px "Liberation Sans", sans-serif;
    outline: 1px solid #000;
    outline-offset: -5px;
}
.tools .hot { border-color: #b02224; border-top-color: #f0b8b8; border-left-color: #f0b8b8; box-shadow: inset 0 0 0 2px #b02224; }
.overview {
    height: 100px;
    margin-top: auto;
    border: 1px solid #5a8f2c;
    border-right: none;
    padding: 53px 0 0 21px;
}
.coords {
    margin-top: 200px;
    height: 47px;
    background: #55cfb0;
    border: 2px solid #a5ecd9;
    border-width: 3px 0 2px;
    padding: 7px 2px;
    font-weight: bold;
    font-size: 15px;
    line-height: 15px;
    white-space: nowrap;
}

/* bottom bars */
.command {
    display: flex;
    height: 35px;
    border-top: 2px solid #000;
    background: #ffffcc;
    font-weight: bold;
}
.command button { flex: none; }
.flat {
    width: 33px;
    padding: 4px;
    border-right: 1px solid #000;
}
.raised {
    width: 30px;
    padding: 3px 0 3px 1px;
    background: #ffffcc;
    border: 3px solid #6cc4ae;
    border-width: 1px 3px;
}
.flat svg { width: 24px; height: 24px; }
.raised svg { width: 22px; height: 24px; }
.command label {
    width: 47px;
    padding-left: 2px;
    line-height: 32px;
    white-space: nowrap;
}
.xy {
    width: 174px;
    padding: 2px;
    border-left: 1px solid #000;
    border-right: 1px solid #000;
}
.xy input {
    width: 100%;
    height: 100%;
    border: 2px solid #f1f1d8;
    border-top-color: #9c9c7c;
    border-left-color: #9c9c7c;
    padding-left: 3px;
}
.message {
    flex: 1;
    border-left: 1px solid #000;
    padding-left: 3px;
    line-height: 32px;
}
.units {
    width: 73px;
    background: #55cfb0;
    border-left: 2px solid #000;
    padding: 2px 0 2px 6px;
}
.units button {
    width: 80px;
    height: 28px;
    display: flex;
    align-items: center;
    gap: 26px;
    padding-left: 5px;
    border: 2px solid #a5ecd9;
    border-bottom-color: #2f7a68;
    font-size: 15px;
    font-weight: bold;
}
.units i {
    width: 13px;
    height: 7px;
    border: 2px solid #a5ecd9;
    border-right-color: #2f7a68;
    border-bottom-color: #2f7a68;
}
.status {
    height: 38px;
    background: #b2ffff;
    border-top: 2px solid #5f8786;
    border-left: 2px solid #5f8786;
    border-bottom: 8px double #5f8786;
    box-shadow: inset 2px 2px #e0ffff, inset 0 -3px #5f9c9c;
    padding-left: 6px;
    text-align: center;
    font-weight: bold;
    line-height: 27px;
}
.taskbar {
    height: 7px;
    background: #101010;
    padding-left: 51%;
}
.taskbar i {
    display: block;
    width: 98px;
    height: 7px;
    background: #333;
}

/* measure popup */
.popup {
    position: absolute;
    right: 0;
    top: 245px;
    width: 184px;
    height: 252px;
    display: flex;
    flex-direction: column;
    background: #55cfb0;
    border-bottom: 1px solid #444;
    font-size: 15px;
    font-weight: bold;
}
.popup-title {
    height: 30px;
    display: flex;
    align-items: center;
    gap: 5px;
    background: #fff;
    color: #999;
    padding: 0 10px 0 8px;
    font: 12px "Noto Sans", sans-serif;
}
.popup-title button { margin-left: auto; }
.popup h2 {
    height: 16px;
    font-size: 15px;
    line-height: 16px;
    text-align: center;
    background: #9adbdb;
    border: 1px solid #000;
    border-bottom: none;
}
.popup label {
    display: flex;
    align-items: center;
    height: 29px;
    gap: 6px;
    padding-left: 6px;
    background: #9adbdb;
    border: 1px solid #000;
    white-space: nowrap;
}
.popup input {
    appearance: none;
    flex: none;
    width: 10px;
    height: 10px;
    margin-left: 2px;
    transform: rotate(45deg);
    border: 2px solid #c5f5f5;
    border-right-color: #4a8586;
    border-bottom-color: #4a8586;
}
.popup input:checked {
    background: #c4004c;
    border-color: #4a8586 #e8ffff #e8ffff #4a8586;
}
.popup-foot {
    margin-top: auto;
    height: 28px;
    padding: 2px;
    border: 1px solid #000;
}

/* word window */
.word {
    position: absolute;
    left: 612px;
    top: 82px;
    width: 921px;
    height: 783px;
    display: flex;
    flex-direction: column;
    background: #bfdbff;
    border-right: 1px solid #dfeaf8;
    font-family: "Noto Sans", "Noto Sans CJK SC", sans-serif;
    color: #15428b;
    box-shadow: 0 2px 8px rgba(0, 0, 0, 0.5);
}
.word-title {
    display: flex;
    align-items: center;
    height: 30px;
    background: #fff;
    padding: 0 18px 0 43px;
    color: #000;
}
.qat {
    width: 92px;
    height: 22px;
    display: flex;
    align-items: center;
    gap: 6px;
    padding-left: 12px;
    border: 1px solid #b9c4d4;
    border-left: none;
    border-radius: 0 11px 11px 0;
    background: #fbfcfe;
}
.word-name {
    flex: 1;
    text-align: center;
    padding-right: 20px;
    font-size: 13px;
}
.more { margin-left: 9px; }
.word .win-buttons { gap: 35px; }
.orb {
    position: absolute;
    left: 5px;
    top: 8px;
    width: 36px;
    height: 36px;
    border-radius: 50%;
    border: 1px solid #7f90ad;
    background: radial-gradient(#fff, #d5dbe6 70%, #98a5ba);
    padding: 5px;
}
.dd {
    flex: none;
    display: block;
    width: 0;
    height: 0;
    margin: 0 4px 0 3px;
    border: 3px solid transparent;
    border-top: 3px solid #56719f;
    border-bottom: none;
}
.dd.up {
    border-top: none;
    border-bottom: 3px solid #56719f;
}
.tabs {
    display: flex;
    height: 28px;
    gap: 17px;
    padding: 2px 4px 0 49px;
    line-height: 23px;
    white-space: nowrap;
}
.tabs a {
    padding: 0 6px;
    font-size: 12px;
}
.tabs .active {
    padding: 0 11px;
    margin-right: -6px;
    background: #e4eefa;
    box-shadow: inset 0 0 0 1px #8db2e3;
    border-radius: 3px 3px 0 0;
}
.help-btn {
    margin: 4px 0 0 auto;
    width: 14px;
    height: 14px;
    border-radius: 50%;
    background: #2c5fc8;
    color: #fff;
    font-size: 10px;
    font-weight: bold;
    line-height: 14px;
}
.ribbon {
    display: flex;
    gap: 4px;
    height: 105px;
    padding: 1px 9px 1px 3px;
    background: linear-gradient(#dbe6f4, #c7d8ed 20%, #d8e8f8);
    border: 1px solid #8db2e3;
    border-bottom: 2px solid #b5eaf2;
    border-radius: 3px;
}
.group {
    display: flex;
    flex-direction: column;
    border: 1px solid #a5bfdf;
    border-radius: 3px;
    background: linear-gradient(#dee8f5, #c9daee 30%, #dbe9f7);
}
.group h3 {
    position: relative;
    margin-top: auto;
    height: 20px;
    background: #c1d8f0;
    color: #3e6aaa;
    font-size: 12px;
    font-weight: normal;
    line-height: 21px;
    text-align: center;
}
.clip h3 {
    padding-right: 18px;
}
.launch {
    position: absolute;
    right: 4px;
    top: 4px;
}
.launch path {
    fill: none;
    stroke: #6a87b5;
}
.clip { width: 73px; }
.font { width: 316px; }
.para { width: 163px; }
.styles { width: 298px; }
.edit { width: 42px; align-items: center; }
.body {
    display: flex;
    justify-content: space-between;
    padding: 4px;
}
.rows2 {
    flex-direction: column;
    gap: 12px;
    padding: 10px 3px 0 2px;
}
.rows3 {
    flex-direction: column;
    gap: 4px;
    padding: 4px 3px 0;
}
.line {
    display: flex;
    align-items: center;
    justify-content: space-between;
}
.combos { display: flex; }
.face, .size {
    appearance: none;
    height: 25px;
    width: 125px;
    padding-left: 2px;
    border: 1px solid #abc1de;
    background: #eaf2fb linear-gradient(#56719f, #56719f) no-repeat right 5px center / 5px 2px;
    color: #000;
}
.size { width: 54px; }
.set {
    display: flex;
    align-items: center;
    height: 21px;
    border: 1px solid #a0b9dd;
    border-radius: 2px;
    background: #d3e2f3;
}
.set button {
    min-width: 22px;
    height: 19px;
    display: flex;
    align-items: center;
    justify-content: center;
    line-height: 18px;
    color: #111;
}
.rows2 .set button { min-width: 21px; }
.set .dd { margin: 0 3px 0 2px; }
.set .ser {
    font-family: "Liberation Serif", serif;
    font-weight: bold;
    font-size: 14px;
}
.set .f18 { font-size: 16px; }
.set .f16 { font-size: 16px; }
.set .f14 { font-size: 12px; }
sup, sub {
    font-size: 8px;
    line-height: 8px;
    color: #2a5bc0;
}
.set sup { align-self: flex-start; }
.set sub { align-self: flex-end; }
.set .wen {
    flex-direction: column;
    line-height: 9px;
    font-size: 11px;
    color: #2a3bc0;
}
.wen small {
    color: #111;
    font-size: 9px;
    line-height: 8px;
}
.boxed {
    border: 1px solid #333;
    width: 15px;
    line-height: 15px;
}
.shade {
    width: 15px;
    line-height: 15px;
    background: #a5a5a5;
}
.rows2 .set .ring {
    min-width: 17px;
    width: 17px;
    height: 17px;
    margin: 0 2px;
    border: 1px solid #222;
    border-radius: 50%;
    font-size: 11px;
}
.set .hl {
    line-height: 12px;
    border-bottom: 4px solid #ff0;
    height: 17px;
    background: #eef09a;
}
.set .col {
    color: #234a9b;
    border-bottom: 4px solid red;
    height: 17px;
    line-height: 12px;
}
.on { background: linear-gradient(#fbd28b, #f9a843 50%, #fde08c); }
.bars { stroke: #111; stroke-width: 1; shape-rendering: crispEdges; }
.sort span {
    font: bold 9px/9px "Liberation Sans", sans-serif;
    color: #a22;
}
.gallery {
    display: flex;
    width: 233px;
    height: 60px;
    gap: 8px;
    padding: 4px 0 4px 4px;
    border: 1px solid #b6cbe6;
    background: #dfeaf7;
}
.gallery > button {
    width: 64px;
    height: 50px;
    background: #fff;
    color: #000080;
    overflow: hidden;
    white-space: nowrap;
    line-height: 18px;
}
.gallery span {
    display: block;
    width: 58px;
    margin-left: 3px;
    overflow: hidden;
    text-align: left;
    color: #000;
    font: 13px/30px "Liberation Serif", serif;
}
.gallery .h1 {
    font-weight: bold;
    font-size: 28px;
}
.gal-scroll {
    margin: -4px 0 -4px -3px;
    flex: 1;
    display: flex;
    flex-direction: column;
}
.gal-scroll button {
    flex: 1;
    border: 1px solid #b6cbe6;
}
.big {
    display: flex;
    flex-direction: column;
    align-items: center;
    line-height: 20px;
    gap: 1px;
    white-space: nowrap;
}
.big .dd { margin: 5px 0 0; }
.clip .big { padding-left: 6px; }
.styles .body { padding-right: 6px; }
.bino {
    width: 31px;
    height: 31px;
    margin: 4px 0 1px;
    padding: 4px 7px;
    border: 1px solid #a9c3e4;
    border-radius: 2px;
    background: #e3eefb;
}
.stack {
    display: flex;
    flex-direction: column;
    gap: 6px;
    padding-right: 2px;
}
.doc {
    flex: 1;
    min-height: 0;
    display: flex;
    justify-content: space-between;
    padding: 6px 1px 0 57px;
    background: linear-gradient(#a9c6ec, #8baad7 22%, #6f97c9 52%, #567eb3 78%, #6896d5);
}
.pages {
    width: 795px;
    position: relative;
    overflow: hidden;
    color: #000;
    font-family: "Noto Sans CJK SC", sans-serif;
    font-size: 14px;
    line-height: 21px;
}
.page {
    background: #fff;
    border-right: 1px solid #446;
    padding: 0 48px;
    height: 509px;
    box-shadow: 0 2px 4px rgba(20, 40, 90, 0.7);
    overflow: hidden;
}
.page.next { margin-top: 15px; }
.page p span, .page p b {
    font-family: "Liberation Mono", "Noto Sans CJK SC", monospace;
    font-size: 12px;
    font-weight: inherit;
    line-height: 12px;
}
.page p .rm {
    font-family: "Liberation Serif", serif;
    font-size: 14px;
}
.page i {
    color: #888;
    font-style: normal;
    font-size: 12px;
    line-height: 12px;
}
.in3 {
    padding-left: 56px;
    white-space: nowrap;
}
.num {
    padding-left: 52px;
    margin-right: -8px;
}
.page .num b, .head b, .head .no {
    display: inline-block;
    width: 24px;
    margin-left: -24px;
}
.head { padding-left: 28px; }
.page p.head b, .page p.head .no {
    width: 28px;
    margin-left: -28px;
    font-size: 14px;
}
.page p.head b { font-weight: bold; }
.first {
    text-indent: 28px;
    margin-right: -8px;
}
.attach {
    display: flex;
    align-items: flex-end;
    height: 101px;
    gap: 80px;
    padding-left: 200px;
}
.attach a {
    align-self: flex-start;
    width: 100px;
    height: 78px;
    margin-top: 6px;
    overflow: hidden;
    text-align: center;
    font-family: "Noto Sans", "Noto Sans CJK SC", sans-serif;
    font-size: 12px;
    line-height: 16px;
}
.attach i { padding-bottom: 8px; }
.attach svg { margin: 0 auto 4px; }
.marks {
    display: flex;
    justify-content: space-between;
    margin: 0 -24px;
}
.marks u {
    width: 24px;
    height: 24px;
    border: 1px solid #aaa;
}
.foot { margin-top: 19px; }
.foot u { border-bottom: none; }
.foot u:first-child, .top-marks u:first-child { border-left: none; }
.foot u:last-child, .top-marks u:last-child { border-right: none; }
.top-marks {
    padding-top: 28px;
    margin-bottom: 1px;
}
.top-marks u { border-top: none; }
.arrow {
    position: absolute;
    left: 533px;
    top: 0;
}
.vscroll {
    width: 17px;
    display: flex;
    flex-direction: column;
    align-items: center;
    color: #112;
    font-size: 9px;
}
.vscroll button { height: 17px; }
.track {
    flex: 1;
    width: 15px;
    display: flex;
    flex-direction: column;
    align-items: center;
    justify-content: space-between;
    padding: 8px 0;
    background: rgba(60, 95, 155, 0.35);
    border-left: 1px solid #8cacd9;
}
.thumb {
    width: 14px;
    height: 31px;
    margin-top: 98px;
    border: 1px solid #6f8fc2;
    border-radius: 2px;
    background: #dfe9f6 linear-gradient(#7f98c4, #7f98c4) no-repeat center / 6px 5px;
}
.word-status {
    height: 23px;
    display: flex;
    align-items: center;
    background: linear-gradient(#d7e6f9, #c0d8f8 40%, #aecbf4 50%, #c6dcfa);
    white-space: nowrap;
    border-top: 1px solid #6f92c6;
}
.word-status > span {
    padding: 0 9px;
    line-height: 20px;
    border-right: 1px solid #9dbde8;
}
.zoom {
    margin-left: auto;
    height: 22px;
    display: flex;
    align-items: center;
    gap: 6px;
    padding: 0 20px 0 6px;
    background: linear-gradient(#a9c8f2, #7fa9e4 50%, #9cc0f0);
    border-left: 1px solid #6f92c6;
}
.views {
    display: flex;
    border: 1px solid #8aaede;
    background: #bdd3f2;
}
.views button {
    width: 18px;
    padding: 1px 2px;
}
.zoom output { margin: 0 3px; }
.round {
    width: 16px;
    height: 16px;
    border: 1px solid #4a6694;
    border-radius: 50%;
    background: #eaf1fb;
    line-height: 13px;
}
.zoom input {
    appearance: none;
    width: 90px;
    height: 14px;
    background: linear-gradient(#456, #456) no-repeat center / 100% 1px;
}
.zoom input::-webkit-slider-thumb {
    appearance: none;
    width: 8px;
    height: 13px;
    border: 1px solid #4a6694;
    border-radius: 1px 1px 4px 4px;
    background: #eaf1fb;
}
```
